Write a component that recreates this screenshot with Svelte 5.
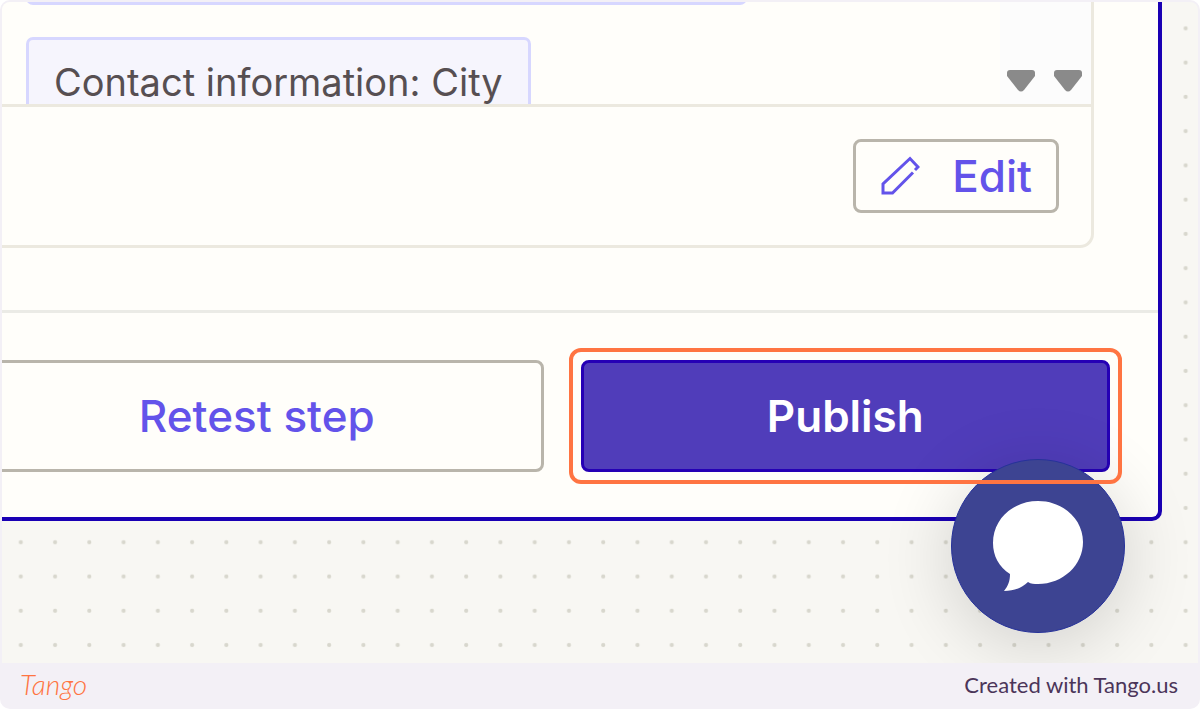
<script lang="ts">
  const fields = [
    { id: 1, label: '' },
    { id: 2, label: 'Contact information: City' },
  ];
</script>

<div class="frame">
  <main class="canvas">
    <svg class="canvas-dots" aria-hidden="true">
      <defs>
        <pattern id="dots" width="34.26" height="34.26" patternUnits="userSpaceOnUse">
          <circle cx="18.8" cy="26.4" r="2.1" fill="#d8d7cd" />
        </pattern>
      </defs>
      <rect width="100%" height="100%" fill="url(#dots)" />
    </svg>

    <section class="panel">
      <div class="card">
        <div class="card-data">
          <ul class="chips">
            {#each fields as field (field.id)}
              <li class="chip" class:chip-empty={!field.label}>{field.label}</li>
            {/each}
          </ul>

          <div class="scroll-corner">
            <svg width="28" height="22" viewBox="0 0 28 22" aria-hidden="true">
              <path d="M3 0h22q3 0 3 3v3L17 20q-3 3-6 0L0 6V3q0-3 3-3z" fill="#8a8a8a" />
            </svg>
            <svg width="28" height="22" viewBox="0 0 28 22" aria-hidden="true">
              <path d="M3 0h22q3 0 3 3v3L17 20q-3 3-6 0L0 6V3q0-3 3-3z" fill="#8a8a8a" />
            </svg>
          </div>
        </div>

        <div class="card-footer">
          <button class="button button-edit" type="button">
            <svg width="40" height="40" viewBox="0 0 40 40" fill="none" aria-hidden="true">
              <path
                d="M33 16.5L12.5 37H3V28L30 2.5L38 11L35 14"
                stroke="#6353ea"
                stroke-width="3"
              />
            </svg>
            Edit
          </button>
        </div>
      </div>

      <div class="actions">
        <div class="actions-row">
          <button class="button" type="button">Retest step</button>
          <div class="highlight">
            <button class="button button-primary" type="button">Publish</button>
          </div>
        </div>
      </div>
    </section>

    <button class="chat" type="button" aria-label="Open chat">
      <svg width="92" height="92" viewBox="0 0 92 92" aria-hidden="true">
        <path
          d="M46 1C71 1 91 19 91 42S71 84 46 84C42 84 39 84 36 82C30 88 22 91 12 91C16 86 18 81 18 74C7 67 1 56 1 43C1 19 21 1 46 1z"
          fill="#fff"
        />
      </svg>
    </button>
  </main>

  <footer class="footer">
    <a class="brand" href="#tango">Tango</a>
    <span class="credit">Created with Tango.us</span>
  </footer>
</div>

<style>
  :global(body) {
    margin: 0;
    background-color: #fff;
  }

  .frame {
    box-sizing: border-box;
    padding: 2px 2px 0;
    border-radius: 10px;
    background-color: #f3f0f6;
    font-family: Inter, 'Liberation Sans', sans-serif;
  }

  .canvas {
    position: relative;
    padding: 0 36px 142px 0;
    border-radius: 8px 8px 0 0;
    background-color: #f8f7f3;
    overflow: hidden;
  }

  .canvas-dots {
    position: absolute;
    inset: 0;
    width: 100%;
    height: 100%;
  }

  .panel {
    position: relative;
    border: solid #1a00b4;
    border-width: 0 4px 4px 0;
    border-radius: 0 0 10px 0;
    background-color: #fffefa;
  }

  .card {
    margin-right: 64px;
    border: solid #ece9df;
    border-width: 0 3px 3px 0;
    border-radius: 0 0 14px 0;
  }

  .card-data {
    height: 102px;
    display: flex;
    justify-content: space-between;
    border-bottom: 3px solid #ece9df;
    overflow: hidden;
  }

  .chips {
    margin: -85px 0 0;
    padding: 0 0 0 24px;
    list-style: none;

    display: flex;
    align-items: flex-start;
    flex-direction: column;
    row-gap: 32px;
  }

  .chip {
    box-sizing: border-box;
    flex-shrink: 0;
    height: 88px;
    padding: 0 25px;
    border: 3px solid #d7d7ff;
    border-radius: 7px;
    background-color: #f6f5fd;
    color: #574f52;
    font-size: 38px;
    line-height: 84px;
    white-space: nowrap;
  }

  .chip-empty {
    width: 721px;
  }

  .scroll-corner {
    box-sizing: border-box;
    width: 91px;
    padding: 0 9px 12px 0;

    display: flex;
    align-items: flex-end;
    justify-content: flex-end;
    column-gap: 19px;

    background-color: #fcfcfc;
  }

  .card-footer {
    padding: 32px;
    display: flex;
    justify-content: flex-end;
  }

  .button {
    box-sizing: border-box;
    height: 112px;
    padding: 0;

    display: flex;
    align-items: center;
    justify-content: center;

    border: 3px solid #b9b5ab;
    border-radius: 8px;
    background-color: transparent;
    color: #6353ea;
    font-family: inherit;
    font-size: 44px;
    font-weight: 500;
    cursor: pointer;
  }

  .button-edit {
    height: 74px;
    padding: 0 24px;
    column-gap: 32px;
  }

  .button-primary {
    width: 100%;
    border-color: #2500b5;
    background-color: #503dba;
    color: #fff;
    font-weight: 600;
  }

  .actions {
    margin-top: 62px;
    padding: 47px 48px 45px 0;
    border-top: 3px solid #ebebe6;
  }

  /* the row runs on past the left edge of the canvas */
  .actions-row {
    margin-left: -32px;
    display: grid;
    grid-template-columns: 13fr 12fr;
    column-gap: 37px;
  }

  .highlight {
    position: relative;
  }

  /* drawn above the chat launcher */
  .highlight::after {
    content: '';
    position: absolute;
    inset: -12px;
    z-index: 2;
    border: 4px solid #ff7442;
    border-radius: 12px;
    pointer-events: none;
  }

  .chat {
    position: absolute;
    right: 73px;
    bottom: 30px;
    z-index: 1;
    width: 174px;
    height: 174px;
    padding: 0;

    display: flex;
    align-items: center;
    justify-content: center;

    border: 1px solid #26329a;
    border-radius: 50%;
    background-color: #3d4492;
    box-shadow: 0 12px 72px rgba(0, 0, 0, 0.16);
    cursor: pointer;
  }

  .footer {
    box-sizing: border-box;
    height: 46px;
    padding: 0 20px 4px 18px;
    display: flex;
    align-items: center;
    justify-content: space-between;
  }

  .brand {
    color: #ff7442;
    font-family: Lato, sans-serif;
    font-size: 28px;
    font-style: italic;
    font-weight: 300;
    text-decoration: none;
  }

  .credit {
    color: #4b3559;
    font-family: Lato, sans-serif;
    font-size: 22px;
  }
</style>
